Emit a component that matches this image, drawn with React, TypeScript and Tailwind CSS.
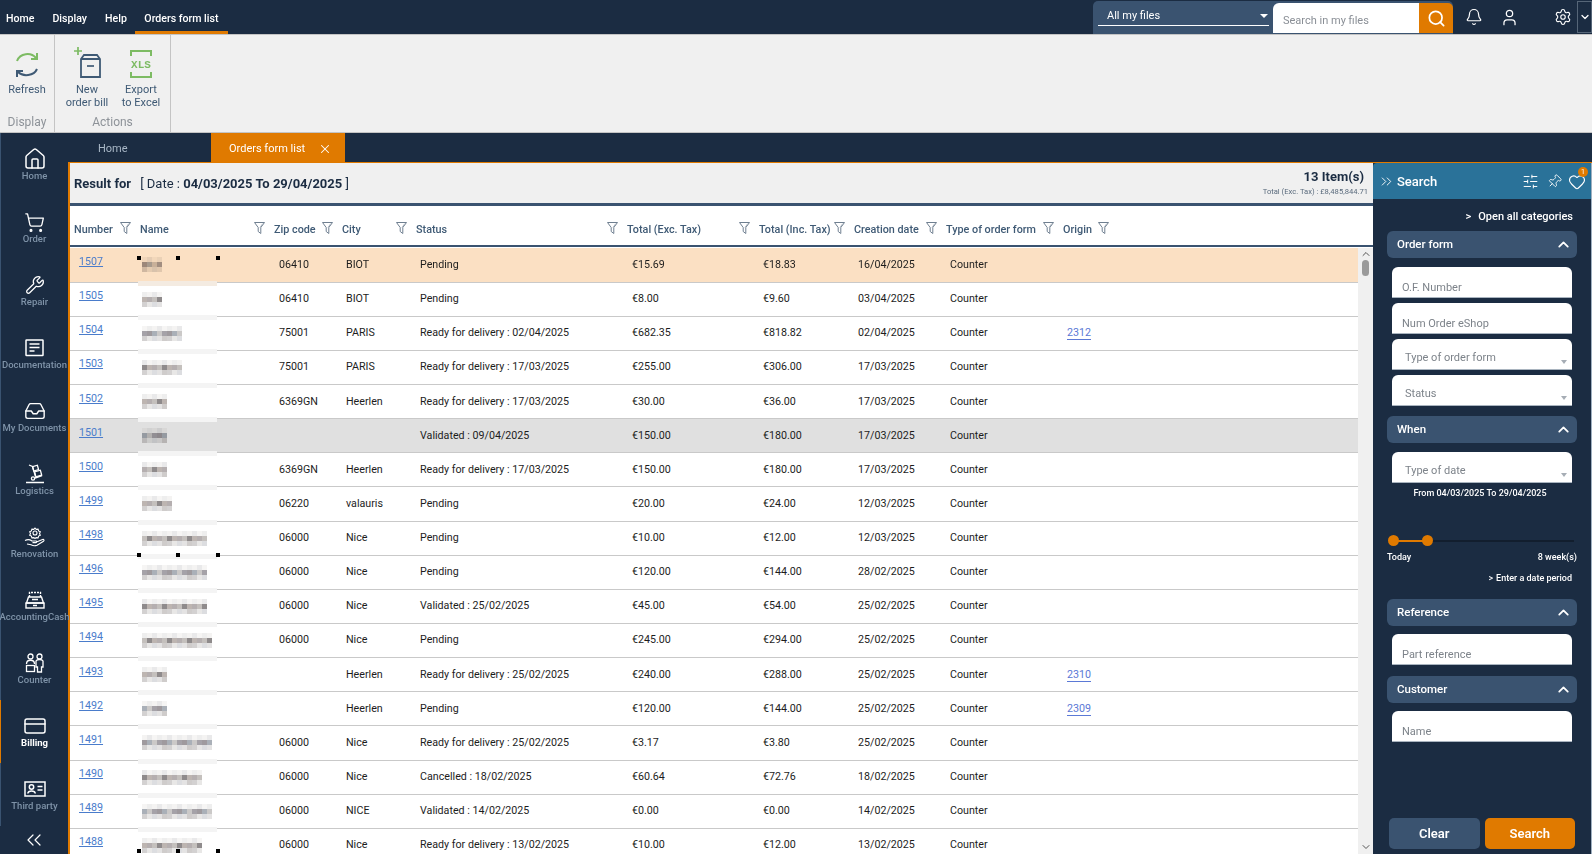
import React from 'react';
import {
  Bell, ChevronDown, ChevronUp, ChevronsLeft, ChevronsRight, CreditCard, Heart, House, Inbox, Pin,
  Search as SearchIcon, Settings, ShoppingCart, SlidersHorizontal, User, Wrench, X,
} from 'lucide-react';

type Order = {
  num: string; w: number; zip: string; city: string; status: string;
  exc: string; inc: string; date: string; origin?: string; bg?: string;
};

const orders: Order[] = [
  { num: '1507', w: 20, zip: '06410', city: 'BIOT', status: 'Pending', exc: '€15.69', inc: '€18.83', date: '16/04/2025', bg: 'bg-[#fbe0c3]' },
  { num: '1505', w: 20, zip: '06410', city: 'BIOT', status: 'Pending', exc: '€8.00', inc: '€9.60', date: '03/04/2025' },
  { num: '1504', w: 40, zip: '75001', city: 'PARIS', status: 'Ready for delivery : 02/04/2025', exc: '€682.35', inc: '€818.82', date: '02/04/2025', origin: '2312' },
  { num: '1503', w: 40, zip: '75001', city: 'PARIS', status: 'Ready for delivery : 17/03/2025', exc: '€255.00', inc: '€306.00', date: '17/03/2025' },
  { num: '1502', w: 25, zip: '6369GN', city: 'Heerlen', status: 'Ready for delivery : 17/03/2025', exc: '€30.00', inc: '€36.00', date: '17/03/2025' },
  { num: '1501', w: 25, zip: '', city: '', status: 'Validated : 09/04/2025', exc: '€150.00', inc: '€180.00', date: '17/03/2025', bg: 'bg-[#e0e0e0]' },
  { num: '1500', w: 25, zip: '6369GN', city: 'Heerlen', status: 'Ready for delivery : 17/03/2025', exc: '€150.00', inc: '€180.00', date: '17/03/2025' },
  { num: '1499', w: 30, zip: '06220', city: 'valauris', status: 'Pending', exc: '€20.00', inc: '€24.00', date: '12/03/2025' },
  { num: '1498', w: 65, zip: '06000', city: 'Nice', status: 'Pending', exc: '€10.00', inc: '€12.00', date: '12/03/2025' },
  { num: '1496', w: 65, zip: '06000', city: 'Nice', status: 'Pending', exc: '€120.00', inc: '€144.00', date: '28/02/2025' },
  { num: '1495', w: 65, zip: '06000', city: 'Nice', status: 'Validated : 25/02/2025', exc: '€45.00', inc: '€54.00', date: '25/02/2025' },
  { num: '1494', w: 70, zip: '06000', city: 'Nice', status: 'Pending', exc: '€245.00', inc: '€294.00', date: '25/02/2025' },
  { num: '1493', w: 25, zip: '', city: 'Heerlen', status: 'Ready for delivery : 25/02/2025', exc: '€240.00', inc: '€288.00', date: '25/02/2025', origin: '2310' },
  { num: '1492', w: 25, zip: '', city: 'Heerlen', status: 'Pending', exc: '€120.00', inc: '€144.00', date: '25/02/2025', origin: '2309' },
  { num: '1491', w: 70, zip: '06000', city: 'Nice', status: 'Ready for delivery : 25/02/2025', exc: '€3.17', inc: '€3.80', date: '25/02/2025' },
  { num: '1490', w: 60, zip: '06000', city: 'Nice', status: 'Cancelled : 18/02/2025', exc: '€60.64', inc: '€72.76', date: '18/02/2025' },
  { num: '1489', w: 70, zip: '06000', city: 'NICE', status: 'Validated : 14/02/2025', exc: '€0.00', inc: '€0.00', date: '14/02/2025' },
  { num: '1488', w: 60, zip: '06000', city: 'Nice', status: 'Ready for delivery : 13/02/2025', exc: '€10.00', inc: '€12.00', date: '13/02/2025' },
];

const columns = ['Number', 'Name', 'Zip code', 'City', 'Status', 'Total (Exc. Tax)', 'Total (Inc. Tax)', 'Creation date', 'Type of order form', 'Origin'];
const gridCols = 'grid grid-cols-[66px_134px_68px_74px_211px_132px_95px_92px_117px_55px_1fr]';

// the names are blurred in the picture, a small mosaic stands in for them
const Mosaic = ({ w, seed }: { w: number; seed: number }) => {
  const rows = [
    ['#f4f3f2', '#eeeeee', '#f6f5f4', '#e9e9ea'],
    ['#b5afb0', '#9f9a9e', '#c4c0bd', '#aab0b8', '#8f8b8c', '#cbc9c8', '#bdb5b1', '#a5a2a8'],
    ['#e4e3e3', '#d3d1d1', '#dcdde0', '#cfcccb', '#e8e7e6'],
  ];
  const cells = [];
  for (let y = 0; y < 3; y++) {
    const shades = rows[y];
    for (let x = 0; x < w / 5; x++) {
      const n = (x * 7 + y * 13 + seed * 5 + x * y * 3) % shades.length;
      cells.push(<rect key={`${x}-${y}`} x={x * 5} y={y * 5} width="5" height="5" fill={shades[n]} />);
    }
  }
  return <svg width={w} height="15" className="block mix-blend-multiply">{cells}</svg>;
};

const Funnel = () => (
  <svg width="11" height="12" viewBox="0 0 11 12" fill="none" stroke="#6f7f90" strokeWidth="1" className="shrink-0">
    <path d="M0.5 0.5h10L6.8 5.5v6L4.2 9.5v-4z" />
    <path d="M6 5.5 L8.8 1.6" stroke="#a8b2bd" />
  </svg>
);

const DocIcon = () => (
  <svg width="20" height="18" viewBox="0 0 20 18" fill="none" stroke="white" strokeWidth="1.5">
    <rect x="1" y="1" width="17" height="15.5" rx="0.5" />
    <path d="M4.5 5h10M4.5 8.5h10M4.5 12h5" />
  </svg>
);

const LogisticsIcon = () => (
  <svg width="20" height="20" viewBox="0 0 20 20" fill="none" stroke="white" strokeWidth="1.3">
    <path d="M4 1l3.5 1.5 3 10" />
    <rect x="8" y="2" width="5" height="4.5" transform="rotate(-15 10 4)" />
    <rect x="10" y="7" width="6" height="5" transform="rotate(-15 13 9)" />
    <circle cx="8" cy="14.5" r="1.6" />
    <path d="M10 14l7-2.5M1 18.5h18" strokeWidth="1.5" />
  </svg>
);

const RenovationIcon = () => (
  <svg width="22" height="21" viewBox="0 0 22 21" fill="none" stroke="white" strokeWidth="1.1">
    <circle cx="11" cy="6" r="2" />
    <path d="M11 1l1.2 1.4 1.9-.3.5 1.8 1.7.9-.8 1.7.8 1.7-1.7.9-.5 1.8-1.9-.3L11 11.5 9.8 10.6l-1.9.3-.5-1.8-1.7-.9.8-1.7-.8-1.7 1.7-.9.5-1.8 1.9.3z" />
    <path d="M1 13.5c3-1.5 5-1 7 .5h4c1 0 1 1.6 0 1.6H8.5M12.5 15l6-2.5c1.5-.5 2 1 1 1.7l-6.5 4c-2 .8-4 .6-6-.5L3 17" />
  </svg>
);

const RegisterIcon = () => (
  <svg width="20" height="18" viewBox="0 0 20 18" fill="none" stroke="white" strokeWidth="1.4">
    <path d="M4.5 6V1.5h11V6" strokeDasharray="2 1" />
    <path d="M3.5 6h13l2 6H1.5z" />
    <rect x="1" y="12" width="18" height="5" />
    <path d="M7 8.5h6M8 14.5h4" />
  </svg>
);

const CounterIcon = () => (
  <svg width="20" height="20" viewBox="0 0 20 20" fill="none" stroke="white" strokeWidth="1.3">
    <circle cx="5.5" cy="3.5" r="2.5" />
    <circle cx="14.5" cy="3.5" r="2.5" />
    <path d="M1.5 11c0-5 8-5 8 0M11 8c1-2 6-2 7 0v6h-1.5v5h-4v-5H11z" />
    <rect x="1.5" y="12.5" width="8" height="6" />
  </svg>
);

const IdIcon = () => (
  <svg width="22" height="16" viewBox="0 0 22 16" fill="none" stroke="white" strokeWidth="1.5">
    <rect x="1" y="1" width="20" height="14" />
    <circle cx="7.5" cy="6" r="2.2" />
    <path d="M3.8 12.5c.5-3.5 7-3.5 7.5 0M13.5 5.5h5M13.5 9h5" />
  </svg>
);

const navItems = [
  { label: 'Home', icon: <House size={24} strokeWidth={1.5} color="white" /> },
  { label: 'Order', icon: <ShoppingCart size={21} strokeWidth={1.5} color="white" /> },
  { label: 'Repair', icon: <Wrench size={20} strokeWidth={1.5} color="white" /> },
  { label: 'Documentation', icon: <DocIcon /> },
  { label: 'My Documents', icon: <Inbox size={22} strokeWidth={1.5} color="white" /> },
  { label: 'Logistics', icon: <LogisticsIcon /> },
  { label: 'Renovation', icon: <RenovationIcon /> },
  { label: 'AccountingCash', icon: <RegisterIcon /> },
  { label: 'Counter', icon: <CounterIcon /> },
  { label: 'Billing', icon: <CreditCard size={24} strokeWidth={1.5} color="white" />, active: true },
  { label: 'Third party', icon: <IdIcon /> },
];

const Sidebar = () => (
  <aside className="w-[68px] shrink-0 flex flex-col bg-[#1b2c42] relative">
    <div className="flex flex-col border-l border-[#3a5370]">
      {navItems.map((item) => (
        <div
          key={item.label}
          className={`h-[63px] flex flex-col items-center pt-[15px] border-l-[1px] -ml-px ${item.active ? 'border-[#e07a00]' : 'border-transparent'}`}
        >
          <div className="h-[22px] flex items-center justify-center">{item.icon}</div>
          <span className={`-mt-px text-[9.5px] leading-[14px] whitespace-nowrap ${item.active ? 'text-white font-bold' : 'text-[#7f93a8] font-medium'}`}>
            {item.label}
          </span>
        </div>
      ))}
    </div>
    <div className="flex justify-center mt-[2px]">
      <ChevronsLeft size={24} strokeWidth={1.2} color="white" />
    </div>
  </aside>
);

const TopBar = () => (
  <header className="h-[34px] shrink-0 bg-[#1b2c42] flex items-stretch text-white text-[10.6px]">
    <nav className="flex font-medium">
      <span className="pl-[6px] pr-[9px] flex items-center pt-[3px]">Home</span>
      <span className="px-[9px] flex items-center pt-[3px]">Display</span>
      <span className="pl-[9px] pr-[8px] flex items-center pt-[3px]">Help</span>
      <span className="px-[9.5px] flex items-center pt-[6px] border-b-[3px] border-[#e07a00]">Orders form list</span>
    </nav>
    <div className="ml-auto flex items-stretch">
      <div className="flex items-stretch bg-[#3a5370] rounded-t-[5px] mt-px w-[360px]">
        <div className="w-[180px] pl-[5px] pr-1">
          <div className="h-[24px] border-b border-white flex items-center justify-between pl-[9px] pr-[1px] pt-[5px] text-[11px] mt-[1px]">
            <span>All my files</span>
            <span className="w-0 h-0 border-x-[4px] border-x-transparent border-t-[4px] border-t-white" />
          </div>
        </div>
        <div className="mt-[2px] flex-1 flex items-stretch mb-[1px]">
          <div className="flex-1 bg-white rounded-tl-[6px] text-[11px] text-[#8a8f96] pl-[10px] pt-[10px]">Search in my files</div>
          <div className="w-[34px] bg-[#e07a00] rounded-tr-[5px] flex items-center justify-center">
            <SearchIcon size={19} strokeWidth={2.2} color="white" />
          </div>
        </div>
      </div>
      <div className="w-[30px] flex items-center justify-end"><Bell size={18} strokeWidth={1.6} color="white" /></div>
      <div className="w-[36px] flex items-center justify-end"><User size={19} strokeWidth={1.6} color="white" /></div>
      <div className="w-[53px] flex items-center justify-end"><Settings size={18} strokeWidth={1.5} color="white" /></div>
      <div className="w-[15px] ml-[5px] my-px border border-[#566678] flex items-center justify-center">
        <ChevronDown size={12} strokeWidth={2.5} color="white" />
      </div>
    </div>
  </header>
);

const RibbonButton = ({ icon, lines, w }: { icon: React.ReactNode; lines: string[]; w: string }) => (
  <div className={`${w} flex flex-col items-center`}>
    <div className="h-[37px] flex items-end">{icon}</div>
    <div className="mt-[5px] text-[11px] leading-[13px] text-[#3f5a75] text-center">
      {lines.map((l) => <div key={l}>{l}</div>)}
    </div>
  </div>
);

const Ribbon = () => (
  <div className="h-[99px] shrink-0 bg-[#f0f0f0] border-y border-[#c4c4c4] flex">
    <div className="w-[55px] border-r border-[#c4c4c4] flex flex-col items-center pt-[6px]">
      <RibbonButton
        w="w-[54px]"
        lines={['Refresh']}
        icon={
          <svg width="26" height="27" viewBox="0 0 26 27" fill="none" strokeWidth="2">
            <path d="M3 10c3-8 14-9 19-3" stroke="#7dbb63" />
            <path d="M23 2v6h-6" stroke="#7dbb63" />
            <path d="M23 18c-3 7-14 8-19 3" stroke="#3f5a75" />
            <path d="M3 26v-6h6" stroke="#3f5a75" />
          </svg>
        }
      />
      <div className="mt-auto mb-[1px] text-[12px] leading-[18px] text-[#8d9298]">Display</div>
    </div>
    <div className="w-[116px] border-r border-[#c4c4c4] flex flex-col pt-[6px]">
      <div className="flex pl-[5px]">
        <RibbonButton
          w="w-[54px]"
          lines={['New', 'order bill']}
          icon={
            <svg width="28" height="33" viewBox="0 0 28 33" fill="none" strokeWidth="1.7">
              <path d="M1 6h8M5 2v8" stroke="#7dbb63" />
              <path d="M8 32V14l3-4h13l3 4v18z M8 14h19" stroke="#3f5a75" strokeWidth="1.8" />
              <path d="M14 21h7" stroke="#3f5a75" />
            </svg>
          }
        />
        <RibbonButton
          w="w-[54px]"
          lines={['Export', 'to Excel']}
          icon={
            <svg width="22" height="28" viewBox="0 0 22 28" fill="none" stroke="#7dbb63" strokeWidth="2">
              <path d="M1 6V1h20v5M1 22v5h20v-5" />
              <text x="11" y="17.5" textAnchor="middle" fontSize="11" fontWeight="700" fill="#7dbb63" stroke="none" fontFamily="Liberation Mono, monospace">XLS</text>
            </svg>
          }
        />
      </div>
      <div className="mt-auto mb-[1px] text-[12px] leading-[18px] text-[#8d9298] text-center">Actions</div>
    </div>
  </div>
);

const OrderRow = ({ o, index }: { o: Order; index: number }) => (
  <div className={`${gridCols} relative h-[34.15px] shrink-0 border-b border-[#c9c9c9] items-center text-[10.7px] text-[#1d1d1d] ${o.bg ?? 'bg-white'}`}>
    <div className="pl-[9px] -mt-[6px]"><a className="text-[#4a7ccb] underline">{o.num}</a></div>
    <div className="pl-[6px]"><Mosaic w={o.w} seed={index + o.w} /></div>
    <div className="pl-[9px]">{o.zip}</div>
    <div className="pl-[8px]">{o.city}</div>
    <div className="pl-[8px]">{o.status}</div>
    <div className="pl-[9px]">{o.exc}</div>
    <div className="pl-[8px]">{o.inc}</div>
    <div className="pl-[8px]">{o.date}</div>
    <div className="pl-[8px]">Counter</div>
    <div className="pl-[8px]">
      {o.origin && <a className="text-[#5b79d6] border-b border-[#5b79d6]">{o.origin}</a>}
    </div>
    <div />
    <span className={`absolute left-[68px] w-[79px] -bottom-[4px] h-[5px] z-10 ${index === 0 ? 'bg-[#f4ebe1]' : 'bg-[#f4f4f4]'}`} />
  </div>
);

const Handle = ({ className }: { className: string }) => (
  <span className={`absolute w-[4px] h-[4px] bg-black z-20 ${className}`} />
);

const OrdersTable = () => (
  <section className="flex-1 min-w-0 flex flex-col bg-[#f0f0f0]">
    <div className="h-[40px] shrink-0 flex items-center justify-between pl-[4px] pr-[5px] text-[#1b2c42]">
      <div className="text-[13px] pt-[1px]">
        <span className="font-bold">Result for</span>
        <span className="ml-[9px] text-[13px]">[ Date : <b>04/03/2025 To 29/04/2025</b> ]</span>
      </div>
      <div className="text-right">
        <div className="text-[13px] leading-[18px] font-bold pr-[4px]">13 Item(s)</div>
        <div className="text-[7.6px] leading-[11px] text-[#5a6b7d] pb-[1px]">Total (Exc. Tax) : £8,485,844.71</div>
      </div>
    </div>
    <div className={`${gridCols} h-[44px] shrink-0 bg-white border-t-[3px] border-b-[2px] border-[#3a5370] items-center pt-[10px] text-[10.8px] font-medium text-[#3f5a75]`}>
      {columns.map((c) => (
        <div key={c} className="pl-[4px] pr-[5px] flex items-center justify-between whitespace-nowrap">
          <span>{c}</span>
          <span className="-mt-[5px]"><Funnel /></span>
        </div>
      ))}
    </div>
    <div className="flex-1 min-h-0 flex bg-white pt-[1.4px] overflow-hidden">
      <div className="flex-1 min-w-0 relative">
        {orders.map((o, i) => <OrderRow key={o.num} o={o} index={i} />)}
        <Handle className="left-[67px] top-[8px]" />
        <Handle className="left-[106px] top-[8px]" />
        <Handle className="left-[146px] top-[8px]" />
        <Handle className="left-[67px] top-[305px]" />
        <Handle className="left-[106px] top-[305px]" />
        <Handle className="left-[146px] top-[305px]" />
        <Handle className="left-[67px] top-[601px]" />
        <Handle className="left-[106px] top-[601px]" />
        <Handle className="left-[146px] top-[601px]" />
      </div>
      <div className="w-[15px] shrink-0 bg-[#f0f0f0] flex flex-col items-center justify-between pb-[1px]">
        <div className="flex flex-col items-center">
          <ChevronUp size={12} strokeWidth={2} color="#555" />
          <span className="w-[7px] h-[16px] rounded-full bg-[#9a9a9a]" />
        </div>
        <ChevronDown size={12} strokeWidth={2} color="#555" />
      </div>
    </div>
  </section>
);

const PanelBar = ({ title, className }: { title: string; className?: string }) => (
  <div className={`h-[27px] mx-[14px] bg-[#3a5370] rounded-[6px] flex items-center justify-between pl-[10px] pr-[5px] text-[11.5px] font-medium text-white ${className ?? ''}`}>
    <span>{title}</span>
    <ChevronUp size={17} strokeWidth={2.5} color="white" />
  </div>
);

const PanelInput = ({ label, select, className }: { label: string; select?: boolean; className?: string }) => (
  <div className={`h-[31px] mx-[19px] bg-white rounded-t-[6px] border-b border-[#a9b4bf] flex items-end justify-between text-[11px] text-[#7d838a] ${select ? 'pl-[13px] pr-[5px] pb-[3px]' : 'pl-[10px] pb-[1px]'} ${className ?? ''}`}>
    <span>{label}</span>
    {select && <span className="w-0 h-0 mb-[2px] border-x-[3.5px] border-x-transparent border-t-[4px] border-t-[#a6adb5]" />}
  </div>
);

const SearchPanel = () => (
  <aside className="w-[219px] shrink-0 bg-[#1b2c42] flex flex-col text-white rounded-tl-[4px] overflow-hidden border-r border-[#9fb0c0]">
    <div className="h-[36px] shrink-0 bg-[#2a7299] flex items-center pl-[5px] pr-[5px] pt-[1px]">
      <ChevronsRight size={17} strokeWidth={1.3} color="white" />
      <span className="ml-[2px] text-[13px] font-medium">Search</span>
      <SlidersHorizontal size={17} strokeWidth={1.4} color="white" className="ml-auto" />
      <Pin size={15} strokeWidth={1.4} color="white" className="ml-[8px] rotate-45" />
      <div className="relative ml-[6px]">
        <Heart size={18} strokeWidth={1.5} color="white" />
        <span className="absolute -top-[6px] -right-[2px] w-[10px] h-[10px] rounded-full bg-[#e07a00] text-[7px] leading-[10px] text-center">1</span>
      </div>
    </div>
    <div className="h-[32px] shrink-0 flex items-center justify-end pr-[18px] pt-[5px] text-[11px] font-medium">
      <span className="mr-[7px]">&gt;</span>Open all categories
    </div>
    <PanelBar title="Order form" />
    <PanelInput label="O.F. Number" className="mt-[9px]" />
    <PanelInput label="Num Order eShop" className="mt-[5px]" />
    <PanelInput label="Type of order form" select className="mt-[5px]" />
    <PanelInput label="Status" select className="mt-[5px]" />
    <PanelBar title="When" className="mt-[10px]" />
    <PanelInput label="Type of date" select className="mt-[9px]" />
    <div className="mt-[4px] text-center text-[9px] leading-[13px] font-medium pr-[4px]">From 04/03/2025 To 29/04/2025</div>
    <div className="mt-[35px] h-[12px] mx-[15px] relative">
      <div className="absolute left-0 right-[2px] top-[5px] h-[2px] bg-[#121e2e]" />
      <div className="absolute left-[2px] w-[34px] top-[5px] h-[2px] bg-[#e07a00]" />
      <span className="absolute left-0 top-0 w-[11px] h-[11px] rounded-full bg-[#e07a00]" />
      <span className="absolute left-[34px] top-0 w-[11px] h-[11px] rounded-full bg-[#e07a00]" />
    </div>
    <div className="mt-[4px] mx-[14px] flex justify-between text-[9px] leading-[13px] font-medium">
      <span>Today</span><span>8 week(s)</span>
    </div>
    <div className="mt-[8px] pr-[19px] text-right text-[9px] leading-[13px] font-medium">
      <span className="mr-[3px]">&gt;</span>Enter a date period
    </div>
    <PanelBar title="Reference" className="mt-[14px]" />
    <PanelInput label="Part reference" className="mt-[8px]" />
    <PanelBar title="Customer" className="mt-[11px]" />
    <PanelInput label="Name" className="mt-[8px]" />
    <div className="mt-auto mb-[5px] mx-[16px] flex gap-[5px]">
      <button className="flex-1 h-[31px] rounded-[5px] bg-[#3a5370] text-[13px] font-semibold">Clear</button>
      <button className="flex-1 h-[31px] rounded-[5px] bg-[#e07a00] text-[13px] font-semibold">Search</button>
    </div>
  </aside>
);

export default function App() {
  return (
    <div className="h-screen w-full overflow-hidden flex flex-col bg-[#1b2c42] font-['Roboto','Noto_Sans',sans-serif]">
      <TopBar />
      <Ribbon />
      <div className="flex-1 min-h-0 flex">
        <Sidebar />
        <main className="flex-1 min-w-0 flex flex-col">
          <div className="h-[29px] shrink-0 flex text-[11px]">
            <div className="w-[143px] flex items-center text-[#a9b8c7] pt-[4px] pl-[30px]">Home</div>
            <div className="w-[134px] bg-[#e07a00] text-white flex items-center pl-[18px] pt-[3px]">
              <span>Orders form list</span>
              <X size={14} strokeWidth={1.8} color="white" className="ml-[13px]" />
            </div>
          </div>
          <div className="flex-1 min-h-0 flex border-t border-l-2 border-[#e07a00]">
            <OrdersTable />
            <SearchPanel />
          </div>
        </main>
      </div>
    </div>
  );
}
